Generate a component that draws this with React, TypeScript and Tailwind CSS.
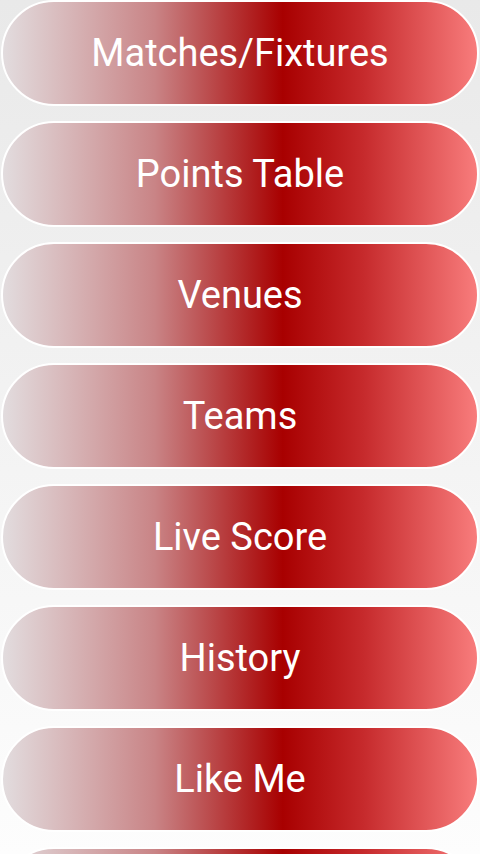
import React from "react";

const items = [
  "Matches/Fixtures",
  "Points Table",
  "Venues",
  "Teams",
  "Live Score",
  "History",
  "Like Me",
  "Share",
];

const MenuButton = ({ label }: { label: string }) => (
  <button className="mx-px flex h-[106px] shrink-0 items-center justify-center rounded-full border-2 border-white bg-[linear-gradient(90deg,#e2dcde_0%,#c98486_32%,#a80000_59%,#c62a2c_76%,#f87c7c_100%)] pt-px text-[38px] text-white font-['Roboto',sans-serif]">
    {label}
  </button>
);

export default function App() {
  return (
    <div className="flex h-[854px] w-[480px] flex-col gap-[15px] overflow-hidden bg-gradient-to-b from-[#e9e9e9] to-[#fdfdfd]">
      {items.map((item) => (
        <MenuButton key={item} label={item} />
      ))}
    </div>
  );
}
